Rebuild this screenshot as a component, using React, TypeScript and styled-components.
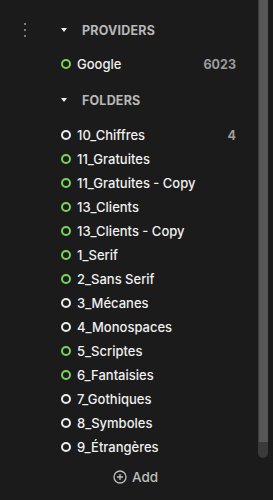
import React from "react";
import styled, { createGlobalStyle } from "styled-components";

const Global = createGlobalStyle`
  html, body { margin: 0; padding: 0; background: #1b1b1b; }
  body { font-family: Inter, "Noto Sans", sans-serif; -webkit-font-smoothing: antialiased; }
`;

const Panel = styled.div`
  display: flex;
  width: 273px;
  height: 500px;
  background: #1b1b1b;
  overflow: hidden;
`;

const Gutter = styled.div`
  width: 50px;
  flex: none;
  display: flex;
  flex-direction: column;
  align-items: center;
  padding-top: 23px;
  gap: 4px;
`;

const Dot = styled.span`
  width: 2px;
  height: 2px;
  border-radius: 50%;
  background: #9a9a9a;
`;

const Content = styled.div`
  flex: 1;
  display: flex;
  flex-direction: column;
  padding: 18px 22px 0 10px;
`;

const Section = styled.div<{ $last?: boolean }>`
  display: flex;
  flex-direction: column;
  margin-bottom: ${(p) => (p.$last ? 0 : 12)}px;
`;

const Header = styled.div<{ $gap: number }>`
  display: flex;
  align-items: center;
  height: 24px;
  margin-bottom: ${(p) => p.$gap}px;
  color: #b8b8b8;
  font-size: 12.5px;
  font-weight: 700;
  letter-spacing: 0.2px;
`;

const Caret = styled.span`
  width: 0;
  height: 0;
  border-left: 3.5px solid transparent;
  border-right: 3.5px solid transparent;
  border-top: 4.5px solid #ececec;
  margin: 0 15px 0 1px;
`;

const Row = styled.div`
  display: flex;
  align-items: center;
  height: 24px;
  color: #f0f0f0;
  font-size: 13px;
  font-weight: 500;
`;

const Ring = styled.span<{ $on: boolean }>`
  width: 10px;
  height: 10px;
  box-sizing: border-box;
  border-radius: 50%;
  border: 2px solid ${(p) => (p.$on ? "#7ad35c" : "#ececec")};
  margin: 0 6px 0 1px;
  flex: none;
`;

const Name = styled.span`
  flex: 1;
`;

const Count = styled.span`
  color: #9d9d9d;
  font-weight: 700;
  font-size: 12.5px;
`;

const AddButton = styled.div`
  display: flex;
  align-items: center;
  gap: 5px;
  height: 24px;
  margin-top: 6px;
  padding-left: 53px;
  color: #bdbdbd;
  font-size: 13.5px;
  font-weight: 500;
`;

const Scroll = styled.div`
  width: 10px;
  flex: none;
  margin-right: 5px;
  display: flex;
  flex-direction: column;
`;

const Thumb = styled.div`
  height: 442px;
  background: #575757;
  border-left: 1px solid #3e3e3e;
  box-sizing: border-box;
`;

const Track = styled.div`
  height: 16px;
  background: #3a3a3a;
  border-radius: 0 0 5px 5px;
`;

const providers = [{ name: "Google", on: true, count: "6023" }];
const folders: { name: string; on: boolean; count?: string }[] = [
  { name: "10_Chiffres", on: false, count: "4" },
  { name: "11_Gratuites", on: true },
  { name: "11_Gratuites - Copy", on: true },
  { name: "13_Clients", on: true },
  { name: "13_Clients - Copy", on: true },
  { name: "1_Serif", on: true },
  { name: "2_Sans Serif", on: true },
  { name: "3_Mécanes", on: false },
  { name: "4_Monospaces", on: false },
  { name: "5_Scriptes", on: true },
  { name: "6_Fantaisies", on: true },
  { name: "7_Gothiques", on: false },
  { name: "8_Symboles", on: false },
  { name: "9_Étrangères", on: false },
];

export default function App() {
  return (
    <>
      <Global />
      <Panel>
        <Gutter>
          <Dot />
          <Dot />
          <Dot />
        </Gutter>
        <Content>
          <Section>
            <Header $gap={10}>
              <Caret />
              PROVIDERS
            </Header>
            {providers.map((p) => (
              <Row key={p.name}>
                <Ring $on={p.on} />
                <Name>{p.name}</Name>
                <Count>{p.count}</Count>
              </Row>
            ))}
          </Section>
          <Section $last>
            <Header $gap={11}>
              <Caret />
              FOLDERS
            </Header>
            {folders.map((f) => (
              <Row key={f.name}>
                <Ring $on={f.on} />
                <Name>{f.name}</Name>
                {f.count && <Count>{f.count}</Count>}
              </Row>
            ))}
          </Section>
          <AddButton>
            <svg width="14" height="14" viewBox="0 0 14 14" fill="none" stroke="#bdbdbd" strokeWidth="1.3">
              <circle cx="7" cy="7" r="6" />
              <path d="M7 4v6M4 7h6" />
            </svg>
            Add
          </AddButton>
        </Content>
        <Scroll>
          <Thumb />
          <Track />
        </Scroll>
      </Panel>
    </>
  );
}
